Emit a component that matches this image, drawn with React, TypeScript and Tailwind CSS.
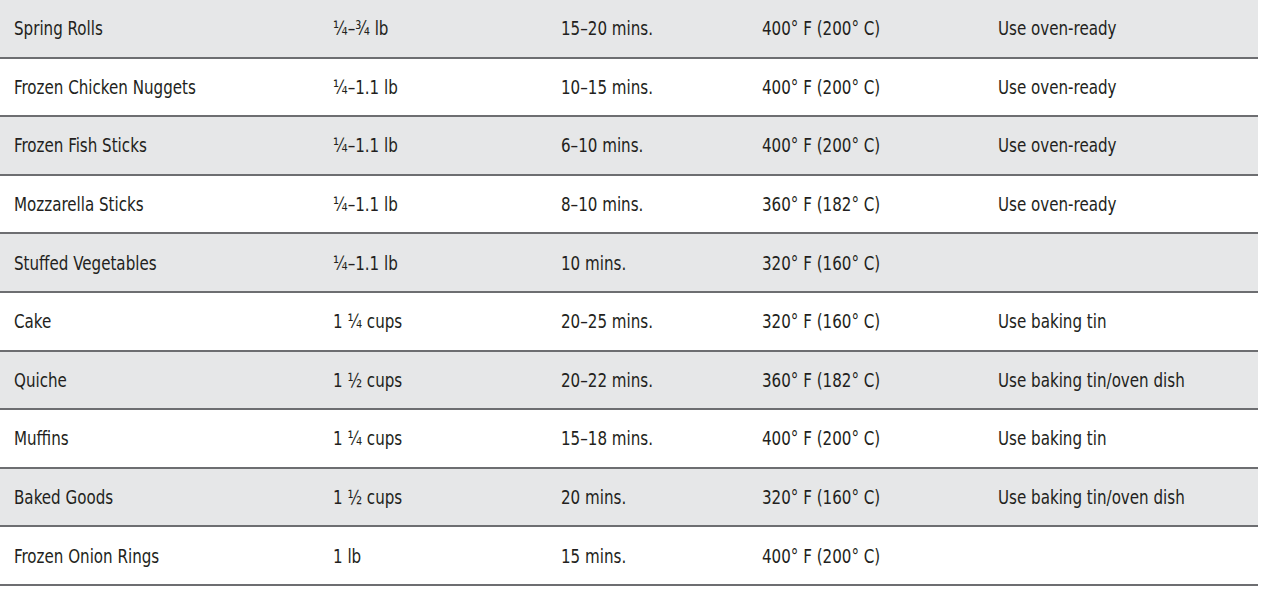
const rows: string[][] = [
  ["Spring Rolls", "¼–¾ lb", "15–20 mins.", "400° F (200° C)", "Use oven-ready"],
  ["Frozen Chicken Nuggets", "¼–1.1 lb", "10–15 mins.", "400° F (200° C)", "Use oven-ready"],
  ["Frozen Fish Sticks", "¼–1.1 lb", "6–10 mins.", "400° F (200° C)", "Use oven-ready"],
  ["Mozzarella Sticks", "¼–1.1 lb", "8–10 mins.", "360° F (182° C)", "Use oven-ready"],
  ["Stuffed Vegetables", "¼–1.1 lb", "10 mins.", "320° F (160° C)", ""],
  ["Cake", "1 ¼ cups", "20–25 mins.", "320° F (160° C)", "Use baking tin"],
  ["Quiche", "1 ½ cups", "20–22 mins.", "360° F (182° C)", "Use baking tin/oven dish"],
  ["Muffins", "1 ¼ cups", "15–18 mins.", "400° F (200° C)", "Use baking tin"],
  ["Baked Goods", "1 ½ cups", "20 mins.", "320° F (160° C)", "Use baking tin/oven dish"],
  ["Frozen Onion Rings", "1 lb", "15 mins.", "400° F (200° C)", ""],
];

export default function App() {
  return (
    <div className="w-[1263px] h-[591px] bg-white overflow-hidden">
      <div
        className="w-[1258px] text-[20px] text-[#231f20]"
        style={{ fontFamily: '"DejaVu Sans Condensed", "Liberation Sans", sans-serif' }}
      >
        {rows.map((r, i) => (
          <div
            key={i}
            className={`grid grid-cols-[319px_228px_201px_236px_1fr] items-center pl-[14px] h-[58.6px] border-b-2 border-[#6d6e71] ${
              i % 2 === 0 ? "bg-[#e6e7e8]" : "bg-white"
            }`}
          >
            {r.map((c, j) => (
              <div key={j} className="min-w-0">
                <span className="inline-block whitespace-nowrap origin-left scale-x-[0.84]">
                  {c}
                </span>
              </div>
            ))}
          </div>
        ))}
      </div>
    </div>
  );
}
